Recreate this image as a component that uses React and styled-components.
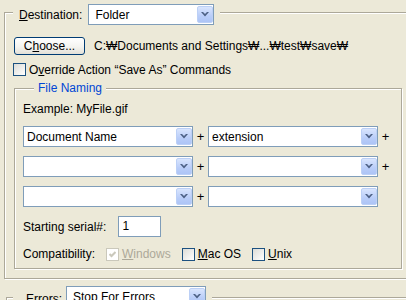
import styled, { createGlobalStyle } from "styled-components"

const GlobalStyle = createGlobalStyle`
  html, body {
    margin: 0;
    padding: 0;
    background: #ece9d8;
    overflow: hidden;
  }
  body {
    font: 12px "Liberation Sans", Arial, sans-serif;
    color: #000;
  }
`

const Chevron = () => (
  <svg width="8" height="5" viewBox="0 0 8 5">
    <polygon points="0,0 2,0 4,2 6,0 8,0 4,4.5" fill="#4d6185" />
  </svg>
)

const Combo = ({ w, pl = 3, children }) => (
  <ComboBox $w={w} $pl={pl}>
    <ComboText>{children}</ComboText>
    <DropBtn>
      <Chevron />
    </DropBtn>
  </ComboBox>
)

const Check = ({ disabled, checked, label }) => (
  <CheckItem $disabled={disabled}>
    <Box $disabled={disabled}>
      {checked && (
        <svg width="7" height="7" viewBox="0 0 7 7">
          <path d="M0.5 3 L2.5 5 L6.5 1" stroke={disabled ? "#cac8bb" : "#21a121"} strokeWidth="2" fill="none" />
        </svg>
      )}
    </Box>
    {label && <span>{label}</span>}
  </CheckItem>
)

export default () => {
  return (
    <Page>
      <GlobalStyle />
      <GroupBox $w={440} $pad="0 0 9px 9px">
        <Legend $m="-9px 0 0 -1px" $px="0 6px" $gap={6}>
          <span><U>D</U>estination:</span>
          <Combo w={126} pl={6}>Folder</Combo>
        </Legend>
        <Row $mt={12}>
          <Button>C<U>h</U>oose...</Button>
          <PathText>C:₩Documents and Settings₩...₩test₩save₩</PathText>
        </Row>
        <Row $mt={8} $ml={-1} $h={13}>
          <Check label={<>O<U>v</U>erride Action “Save As” Commands</>} />
        </Row>
        <GroupBox $w={388} $mt={12} $pad="0 8px 7px 8px">
          <Legend $m="-8px 0 0 11px" $px="0 4px" $blue>File Naming</Legend>
          <Line $mt={7}>Example: MyFile.gif</Line>
          <NameGrid>
            <Combo w={170}>Document Name</Combo>
            <Plus>+</Plus>
            <Combo w={170}>extension</Combo>
            <Plus>+</Plus>
            <Combo w={170} />
            <Plus>+</Plus>
            <Combo w={170} />
            <Plus>+</Plus>
            <Combo w={170} />
            <Plus>+</Plus>
            <Combo w={170} />
            <Plus $hidden>+</Plus>
          </NameGrid>
          <Row $mt={9} $gap={12}>
            <span>Starting serial#:</span>
            <Field>1</Field>
          </Row>
          <Row $mt={10} $gap={11} $h={14}>
            <span>Compatibility:</span>
            <Check disabled checked label={<><U>W</U>indows</>} />
            <Check label={<><U>M</U>ac OS</>} />
            <Check label={<><U>U</U>nix</>} />
          </Row>
        </GroupBox>
      </GroupBox>
      <GroupBox $w={440} $mt={18} $ml={2} $pad="0">
        <Legend $m="-12px 0 0 6px" $px="0 6px 0 13px" $gap={4} $end>
          <ErrLabel>Errors:</ErrLabel>
          <Combo w={140} pl={6}>Stop For Errors</Combo>
        </Legend>
        <Spacer />
      </GroupBox>
    </Page>
  )
}

const Page = styled.div`
  padding: 12px 0 0 4px;
`

const GroupBox = styled.div`
  box-sizing: border-box;
  width: ${p => p.$w}px;
  margin-top: ${p => p.$mt || 0}px;
  margin-left: ${p => p.$ml || 0}px;
  padding: ${p => p.$pad};
  border: 1px solid #aca899;
  box-shadow: inset 1px 1px 0 #fff, 1px 1px 0 #fff;
`

const Legend = styled.div`
  display: flex;
  align-items: ${p => (p.$end ? "flex-end" : "center")};
  gap: ${p => p.$gap || 0}px;
  width: fit-content;
  margin: ${p => p.$m};
  padding: ${p => p.$px};
  background: #ece9d8;
  line-height: 14px;
  color: ${p => (p.$blue ? "#0046d5" : "#000")};
`

const U = styled.span`
  text-decoration: underline;
`

const Row = styled.div`
  display: flex;
  align-items: center;
  gap: ${p => p.$gap || 0}px;
  height: ${p => (p.$h ? `${p.$h}px` : "auto")};
  margin-top: ${p => p.$mt || 0}px;
  margin-left: ${p => p.$ml || 0}px;
  line-height: 14px;
  white-space: nowrap;
`

const Line = styled.div`
  margin-top: ${p => p.$mt || 0}px;
  line-height: 14px;
`

const Button = styled.button`
  box-sizing: border-box;
  width: 71px;
  height: 18px;
  padding: 0;
  border: 1px solid #003c74;
  border-radius: 3px;
  background: linear-gradient(#ffffff, #f4f4f0 55%, #e3e0d7);
  font: inherit;
  color: #000;
`

const PathText = styled.span`
  margin-left: 9px;
`

const ComboBox = styled.div`
  box-sizing: border-box;
  width: ${p => p.$w}px;
  height: 21px;
  display: flex;
  align-items: stretch;
  padding-left: ${p => p.$pl}px;
  border: 1px solid #7f9db9;
  background: #fff;
  line-height: 14px;
`

const ComboText = styled.span`
  flex: 1;
  align-self: center;
  white-space: nowrap;
  overflow: hidden;
`

const DropBtn = styled.span`
  box-sizing: border-box;
  width: 16px;
  margin: 1px 0 1px;
  display: flex;
  align-items: center;
  justify-content: center;
  border: 1px solid #bcd0f6;
  border-radius: 2px;
  background: linear-gradient(#d9e5fd, #b9cdf9 60%, #adc4f6);
`

const CheckItem = styled.label`
  display: flex;
  align-items: center;
  gap: 3px;
  color: ${p => (p.$disabled ? "#aca899" : "#000")};
`

const Box = styled.span`
  box-sizing: border-box;
  flex: none;
  width: 13px;
  height: 13px;
  display: flex;
  align-items: center;
  justify-content: center;
  border: 1px solid ${p => (p.$disabled ? "#cac8bb" : "#1c5180")};
  background: ${p => (p.$disabled ? "#fff" : "linear-gradient(135deg, #dcdcd7, #ffffff)")};
`

const NameGrid = styled.div`
  display: grid;
  grid-template-columns: 170px 15px 170px 15px;
  row-gap: 9px;
  margin-top: 10px;
`

const Plus = styled.span`
  display: flex;
  align-items: center;
  justify-content: center;
  font-size: 13px;
  visibility: ${p => (p.$hidden ? "hidden" : "visible")};
`

const Field = styled.div`
  box-sizing: border-box;
  width: 43px;
  height: 21px;
  padding-left: 3px;
  border: 1px solid #7f9db9;
  background: #fff;
  line-height: 19px;
`

const ErrLabel = styled.span`
  margin-bottom: 1px;
`

const Spacer = styled.div`
  height: 40px;
`
